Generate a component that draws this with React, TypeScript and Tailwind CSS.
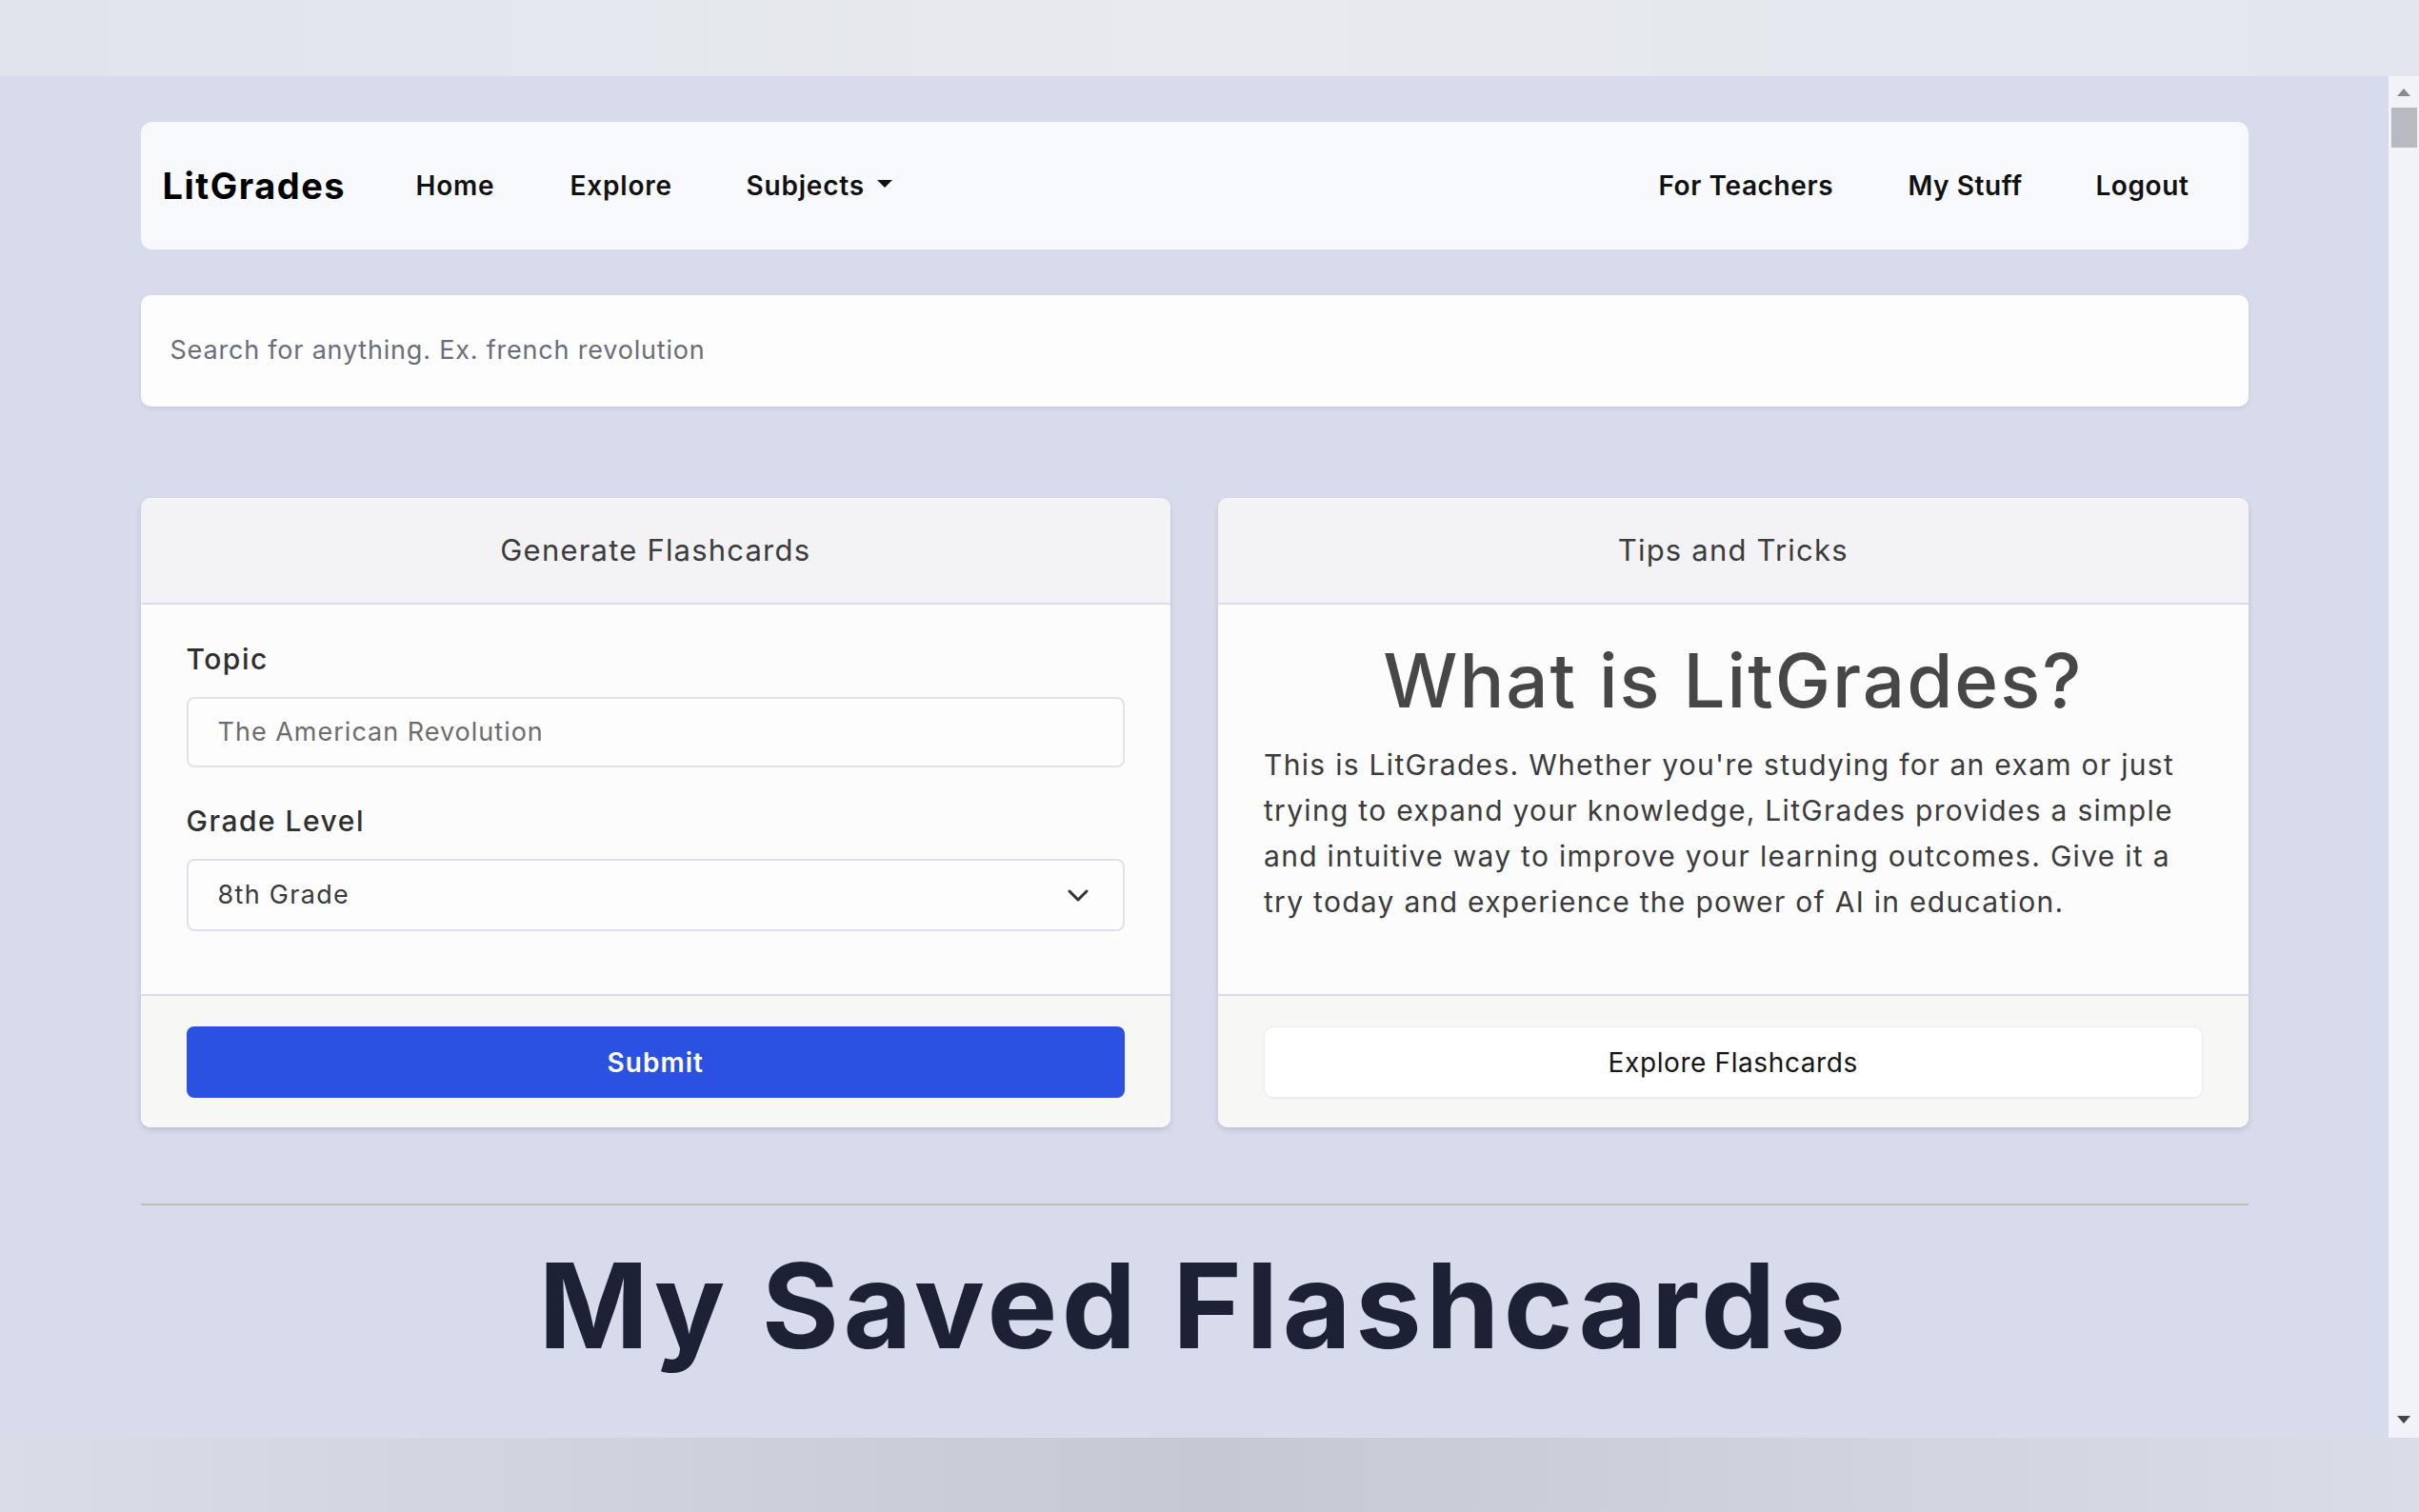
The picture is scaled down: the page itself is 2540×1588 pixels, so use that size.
import React from "react";

function Caret() {
  return (
    <svg width="16" height="8" viewBox="0 0 16 8" className="ml-[13px] mt-[-4px]">
      <polygon points="0,0 16,0 8,8" fill="#111" />
    </svg>
  );
}

function Chevron() {
  return (
    <svg width="22" height="13" viewBox="0 0 22 13">
      <polyline points="2,2 11,11 20,2" fill="none" stroke="#333" strokeWidth="3" strokeLinecap="round" strokeLinejoin="round" />
    </svg>
  );
}

export default function App() {
  return (
    <div className="w-[2540px] h-[1588px] flex flex-col overflow-hidden font-['Inter',sans-serif]">
      {/* top band */}
      <div className="h-[80px] shrink-0 bg-linear-to-r from-[#e1e4eb] via-[#e8eaf0] to-[#e3e6ed]" />

      {/* browser viewport */}
      <div className="h-[1430px] shrink-0 flex">
        <div className="flex-1 bg-[#d7dbeb] pt-[48px]">
          <div className="w-[2213px] mx-auto">
            {/* navbar */}
            <nav className="h-[134px] rounded-[12px] bg-[#f7f9fd] flex items-center pl-[23px] pr-[62px]">
              <div className="w-[266px] text-[38px] font-bold text-black tracking-[1.5px]">LitGrades</div>
              <div className="w-[162px] text-[28px] font-semibold text-[#111] tracking-[0.8px]">Home</div>
              <div className="w-[185px] text-[28px] font-semibold text-[#111] tracking-[0.8px]">Explore</div>
              <div className="flex items-center text-[28px] font-semibold text-[#111] tracking-[0.8px]">
                Subjects
                <Caret />
              </div>
              <div className="flex-1" />
              <div className="w-[262px] text-[28px] font-semibold text-[#111] tracking-[0.6px]">For Teachers</div>
              <div className="w-[197px] text-[28px] font-semibold text-[#111] tracking-[0.6px]">My Stuff</div>
              <div className="text-[28px] font-semibold text-[#111] tracking-[0.6px]">Logout</div>
            </nav>

            {/* search */}
            <div className="mt-[48px] h-[117px] rounded-[10px] bg-[#fdfdfe] shadow-[0_2px_4px_rgba(0,0,0,0.08)] flex items-center px-[31px]">
              <span className="text-[27px] text-[#6b6e78] tracking-[0.8px]">Search for anything. Ex. french revolution</span>
            </div>

            {/* cards */}
            <div className="mt-[96px] grid grid-cols-2 gap-[50px]">
              {/* generate card */}
              <div className="h-[661px] rounded-[10px] overflow-hidden bg-[#fcfcfd] shadow-[0_3px_6px_rgba(0,0,0,0.12)] flex flex-col">
                <div className="h-[112px] shrink-0 bg-[#f3f3f5] border-b-2 border-[#dcdceb] flex items-center justify-center">
                  <span className="text-[31px] text-[#3c3c3c] tracking-[1.2px]">Generate Flashcards</span>
                </div>
                <div className="flex-1 px-[48px] pt-[33px]">
                  <div className="h-[48px] flex items-center text-[30px] font-medium text-[#2f2f2f] tracking-[1.5px]">Topic</div>
                  <div className="mt-[16px] h-[74px] rounded-[8px] border-2 border-[#e2e2ea] bg-[#fdfdfd] flex items-center px-[31px]">
                    <span className="text-[27px] text-[#6d6d6d] tracking-[1px]">The American Revolution</span>
                  </div>
                  <div className="mt-[32px] h-[48px] flex items-center text-[30px] font-medium text-[#2f2f2f] tracking-[1.5px]">Grade Level</div>
                  <div className="mt-[16px] h-[76px] rounded-[8px] border-2 border-[#dfe0ec] bg-[#fdfdfd] flex items-center justify-between pl-[31px] pr-[36px]">
                    <span className="text-[27px] text-[#3a3a3a] tracking-[1.3px]">8th Grade</span>
                    <Chevron />
                  </div>
                </div>
                <div className="h-[140px] shrink-0 bg-[#f7f7f5] border-t-2 border-[#dcdceb] px-[48px] pt-[32px]">
                  <div className="h-[75px] rounded-[8px] bg-[#2b51e3] flex items-center justify-center">
                    <span className="text-[28px] font-semibold text-white tracking-[1px]">Submit</span>
                  </div>
                </div>
              </div>

              {/* tips card */}
              <div className="h-[661px] rounded-[10px] overflow-hidden bg-[#fcfcfd] shadow-[0_3px_6px_rgba(0,0,0,0.12)] flex flex-col">
                <div className="h-[112px] shrink-0 bg-[#f3f3f5] border-b-2 border-[#dcdceb] flex items-center justify-center">
                  <span className="text-[31px] text-[#3c3c3c] tracking-[1.2px]">Tips and Tricks</span>
                </div>
                <div className="flex-1 px-[48px] pt-[32px]">
                  <h1 className="text-center text-[78px] leading-[96px] font-medium text-[#474747] tracking-[2px]">What is LitGrades?</h1>
                  <p className="mt-[16px] text-[30px] leading-[48px] text-[#3b3b3b] whitespace-nowrap tracking-[1.3px]">
                    This is LitGrades. Whether you're studying for an exam or just
                    <br />
                    trying to expand your knowledge, LitGrades provides a simple
                    <br />
                    and intuitive way to improve your learning outcomes. Give it a
                    <br />
                    try today and experience the power of AI in education.
                  </p>
                </div>
                <div className="h-[140px] shrink-0 bg-[#f7f7f5] border-t-2 border-[#dcdceb] px-[48px] pt-[32px]">
                  <div className="h-[75px] rounded-[10px] bg-white border border-[#ececf0] shadow-[0_1px_3px_rgba(0,0,0,0.05)] flex items-center justify-center">
                    <span className="text-[28px] text-[#151515] tracking-[0.6px]">Explore Flashcards</span>
                  </div>
                </div>
              </div>
            </div>

            {/* divider */}
            <div className="mt-[80px] h-[2px] bg-[#b9c0bb]" />

            {/* saved title */}
            <h2 className="mt-[31px] text-center text-[124px] leading-[149px] font-bold text-[#1d2136] tracking-[4.5px]">My Saved Flashcards</h2>
          </div>
        </div>

        {/* scrollbar */}
        <div className="w-[32px] shrink-0 bg-[#f2f3f8] flex flex-col items-center">
          <svg width="14" height="8" viewBox="0 0 14 8" className="mt-[13px]">
            <polygon points="0,8 14,8 7,0" fill="#8a8a8a" />
          </svg>
          <div className="mt-[12px] w-[27px] h-[42px] bg-[#b8bac2]" />
          <div className="flex-1" />
          <svg width="14" height="8" viewBox="0 0 14 8" className="mb-[15px]">
            <polygon points="0,0 14,0 7,8" fill="#444" />
          </svg>
        </div>
      </div>

      {/* bottom band */}
      <div className="flex-1 bg-linear-to-r from-[#d9dde7] via-[#c5c9d4] to-[#d9dde7]" />
    </div>
  );
}
